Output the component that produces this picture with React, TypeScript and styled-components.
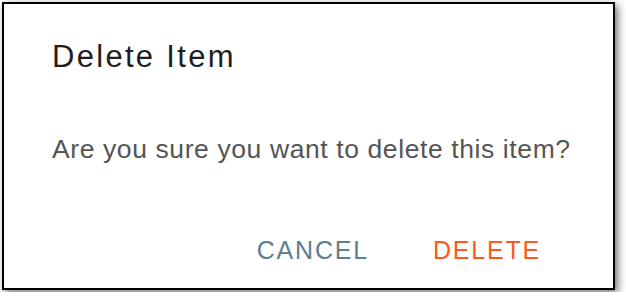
import React from "react";
import styled, { createGlobalStyle } from "styled-components";

const Global = createGlobalStyle`
  html, body { margin: 0; padding: 0; background: #ffffff; }
  body { font-family: "Liberation Sans", Arial, sans-serif; }
`;

const Dialog = styled.div`
  box-sizing: border-box;
  margin: 2px;
  width: 613px;
  height: 288px;
  border: 2px solid #000;
  background: #fff;
  box-shadow: 3px 3px 8px rgba(0, 0, 0, 0.55);
  display: flex;
  flex-direction: column;
  padding: 37px 0 0 48px;
`;

const Title = styled.h2`
  margin: 0;
  font-size: 31px;
  font-weight: 400;
  line-height: 32px;
  color: #1f1f1f;
  letter-spacing: 2.3px;
`;

const Message = styled.p`
  margin: 60px 0 0;
  font-size: 26.5px;
  line-height: 32px;
  color: #555;
  letter-spacing: 0.6px;
`;

const Actions = styled.div`
  display: flex;
  justify-content: flex-end;
  gap: 64px;
  margin-top: auto;
  padding: 0 72px 22px 0;
`;

const ActionButton = styled.button<{ $tone: string }>`
  border: none;
  background: none;
  padding: 0;
  font-family: "Liberation Sans", Arial, sans-serif;
  font-size: 25px;
  line-height: 32px;
  letter-spacing: 1.8px;
  color: ${(p) => p.$tone};
  cursor: pointer;
`;

export default function App() {
  return (
    <>
      <Global />
      <Dialog>
        <Title>Delete Item</Title>
        <Message>Are you sure you want to delete this item?</Message>
        <Actions>
          <ActionButton $tone="#607d8b">CANCEL</ActionButton>
          <ActionButton $tone="#ff5722">DELETE</ActionButton>
        </Actions>
      </Dialog>
    </>
  );
}
